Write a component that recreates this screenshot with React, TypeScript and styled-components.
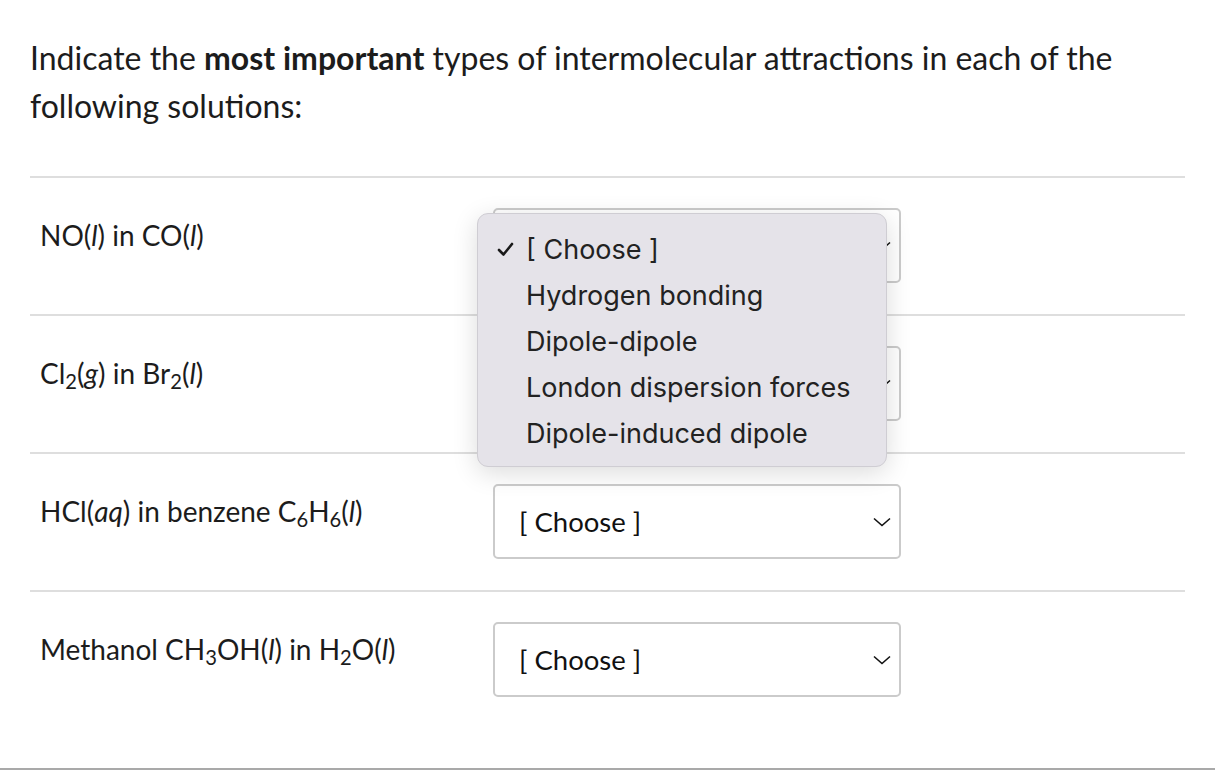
import React from 'react'
import styled, { createGlobalStyle } from 'styled-components'

const GlobalStyle = createGlobalStyle`
  body {
    margin: 0;
    background: #fff;
    font-family: Lato, "Open Sans", sans-serif;
    color: #1c1c1c;
  }
`

const rows = [
  { key: 'no', label: (<>NO(<i>l</i>) in CO(<i>l</i>)</>), open: true },
  { key: 'cl', label: (<>Cl<sub>2</sub>(<i>g</i>) in Br<sub>2</sub>(<i>l</i>)</>), open: false },
  { key: 'hcl', label: (<>HCl(<i>aq</i>) in benzene C<sub>6</sub>H<sub>6</sub>(<i>l</i>)</>), open: false },
  { key: 'meoh', label: (<>Methanol CH<sub>3</sub>OH(<i>l</i>) in H<sub>2</sub>O(<i>l</i>)</>), open: false },
]

const options = ['[ Choose ]', 'Hydrogen bonding', 'Dipole-dipole', 'London dispersion forces', 'Dipole-induced dipole']

const App: React.FC = () => {
  return (
    <>
      <GlobalStyle />
      <Page>
        <Question>
          Indicate the <b>most important</b> types of intermolecular attractions in each of the following solutions:
        </Question>
        <Table>
          {rows.map((r) => (
            <Row key={r.key} isOpen={r.open}>
              <Label>{r.label}</Label>
              <SelectWrap>
                <SelectBox>
                  <span>[ Choose ]</span>
                  <Chevron viewBox="0 0 18 10">
                    <path d="M1 1.5 L9 8.5 L17 1.5" fill="none" stroke="#111" strokeWidth="1.6" />
                  </Chevron>
                </SelectBox>
                {r.open && (
                  <Menu>
                    {options.map((o, i) => (
                      <MenuItem key={o}>
                        <Check>
                          {i === 0 && (
                            <svg width="17" height="15" viewBox="0 0 17 15">
                              <path d="M2 8 L6.5 12.5 L15 2" fill="none" stroke="#1a1a1a" strokeWidth="2.6" strokeLinecap="round" strokeLinejoin="round" />
                            </svg>
                          )}
                        </Check>
                        {o}
                      </MenuItem>
                    ))}
                  </Menu>
                )}
              </SelectWrap>
            </Row>
          ))}
        </Table>
      </Page>
      <BottomRule />
    </>
  )
}

export default App

const Page = styled.div`
  padding: 34px 30px 0 30px;
`

const Question = styled.p`
  margin: 0;
  font-size: 32px;
  line-height: 48px;
  max-width: 1120px;
  b {
    font-weight: 700;
  }
`

const Table = styled.div`
  margin-top: 46px;
  width: 1155px;
`

const Row = styled.div<{ isOpen?: boolean }>`
  display: flex;
  border-top: 2px solid #dedede;
  padding: 30px 0 31px;
  position: relative;
  z-index: ${({ isOpen }) => (isOpen ? 5 : 1)};
`

const Label = styled.div`
  width: 463px;
  padding-left: 10px;
  box-sizing: border-box;
  font-size: 28px;
  line-height: 32px;
  padding-top: 11px;
  sub {
    font-size: 0.72em;
    line-height: 0;
    vertical-align: -0.25em;
  }
  i {
    font-style: italic;
  }
`

const SelectWrap = styled.div`
  position: relative;
`

const SelectBox = styled.div`
  width: 408px;
  height: 75px;
  box-sizing: border-box;
  border: 2px solid #cbcbcb;
  border-radius: 5px;
  display: flex;
  align-items: center;
  justify-content: space-between;
  padding: 0 8px 0 24px;
  font-size: 27.5px;
  color: #111;
  background: #fff;
`

const Chevron = styled.svg`
  width: 18px;
  height: 10px;
`

const Menu = styled.div`
  position: absolute;
  left: -16px;
  top: 5px;
  width: 410px;
  box-sizing: border-box;
  padding: 12px 0 10px;
  background: #e5e3e9;
  border: 1px solid #cfcdd3;
  border-radius: 11px;
  box-shadow: 0 6px 26px rgba(0, 0, 0, 0.14);
  font-family: Inter, "Liberation Sans", sans-serif;
  font-size: 27px;
  color: #222;
`

const MenuItem = styled.div`
  display: flex;
  align-items: center;
  height: 46px;
`

const Check = styled.span`
  width: 48px;
  padding-left: 19px;
  box-sizing: border-box;
  display: flex;
  align-items: center;
`

const BottomRule = styled.div`
  margin-top: 40px;
  height: 2px;
  background: #a9a9a9;
`
